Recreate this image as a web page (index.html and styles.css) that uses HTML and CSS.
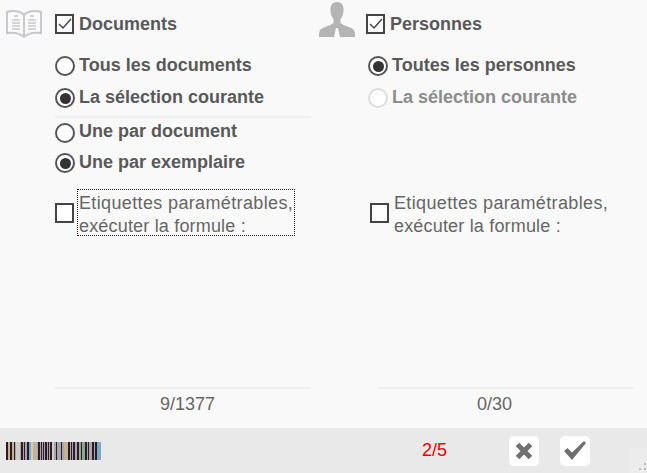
FILE: index.html
```html
<!DOCTYPE html>
<html lang="fr">
  <head>
    <meta charset="UTF-8" />
    <meta name="viewport" content="width=device-width, initial-scale=1.0" />
    <title>Etiquettes</title>
    <link rel="stylesheet" href="styles.css">
  </head>
  <body>
    <div class="wrap">
      <div class="col col-left">
        <div class="head">
          <svg class="icon-book" width="36" height="28" viewBox="0 0 36 28">
            <g fill="#fbfbfb" stroke="#c6c8cc" stroke-width="2">
              <path d="M18 5C14 1 8 0 1 2V23C8 22 14 23 18 27C22 23 28 22 35 23V2C28 0 22 1 18 5Z" />
              <path d="M18 5V27" />
            </g>
            <g stroke="#c8c8c8" stroke-width="1.500" fill="none">
              <path d="M8 6H12M6 10H14M6 13H14M6 16H14M6 19H14" />
              <path d="M24 6H28M22 10H30M22 13H30M22 16H30M22 19H30" />
            </g>
          </svg>
          <label class="check-line">
            <span class="box">
              <svg width="14" height="12" viewBox="0 0 14 12"><path d="M1 6L5 10L13 1" fill="none" stroke="#444" stroke-width="1.500" /></svg>
            </span>
            <b>Documents</b>
          </label>
        </div>
        <div class="options">
          <div class="radio-line"><span class="radio"></span><b>Tous les documents</b></div>
          <div class="radio-line"><span class="radio on"></span><b>La sélection courante</b></div>
          <div class="sep"></div>
          <div class="radio-line short"><span class="radio"></span><b>Une par document</b></div>
          <div class="radio-line"><span class="radio on"></span><b>Une par exemplaire</b></div>
        </div>
        <div class="formula">
          <span class="box"></span>
          <span class="formula-text focus">Etiquettes paramétrables,<br /><span class="line-two">exécuter la formule :</span></span>
        </div>
        <div class="count">9/1377</div>
      </div>

      <div class="col col-right">
        <div class="head">
          <svg class="icon-person" width="36" height="36" viewBox="0 0 36 36">
            <path fill="#b4b4b4" d="M18 0C13 0 11 4 11.500 9C11.700 13 13 15 14.500 17V21C11 24 4 25 1 28C0 30 0 33 0 35H15L17 26H19L21 35H36C36 33 36 30 35 28C32 25 25 24 21.500 21V17C23 15 24.300 13 24.500 9C25 4 23 0 18 0Z" />
          </svg>
          <label class="check-line">
            <span class="box">
              <svg width="14" height="12" viewBox="0 0 14 12"><path d="M1 6L5 10L13 1" fill="none" stroke="#444" stroke-width="1.500" /></svg>
            </span>
            <b>Personnes</b>
          </label>
        </div>
        <div class="options">
          <div class="radio-line"><span class="radio on"></span><b>Toutes les personnes</b></div>
          <div class="radio-line off"><span class="radio"></span><b>La sélection courante</b></div>
        </div>
        <div class="formula">
          <span class="box"></span>
          <span class="formula-text">Etiquettes paramétrables,<br /><span class="line-two">exécuter la formule :</span></span>
        </div>
        <div class="count">0/30</div>
      </div>
    </div>

    <div class="footer">
      <svg class="barcode" width="95" height="18" viewBox="0 0 95 18">
        <rect width="95" height="18" fill="#a8a6ae" />
        <path fill="#c4b296" d="M2 0h2v18H2zM6 0h2v18H6zM27 0h4v18h-4zM58 0h4v18h-4z" />
        <path fill="#ccd0c6" d="M10 0h4v18h-4zM25 0h2v18h-2zM46 0h2v18h-2z" />
        <path fill="#8aa890" d="M74 0h5v18h-5z" />
        <path fill="#78aacc" d="M23 0h2v18h-2zM91 0h4v18h-4z" />
        <path fill="#2e1c22" d="M0 0h2v18H0zM4 0h2v18H4zM8 0h1v18H8zM15 0h2v18h-2zM18 0h1v18h-1zM21 0h2v18h-2zM32 0h2v18h-2zM35 0h1v18h-1zM37 0h1v18h-1zM39 0h2v18h-2zM42 0h1v18h-1zM44 0h2v18h-2zM50 0h1v18h-1zM55 0h1v18h-1zM62 0h2v18h-2zM65 0h1v18h-1zM67 0h2v18h-2zM71 0h2v18h-2zM75 0h1v18h-1zM79 0h2v18h-2zM82 0h1v18h-1zM86 0h2v18h-2zM89 0h2v18h-2z" />
      </svg>
      <div class="pages">2/5</div>
      <button class="btn">
        <svg width="18" height="18" viewBox="0 0 18 18"><path d="M2.500 2.500L15.500 15.500M15.500 2.500L2.500 15.500" stroke="#707070" stroke-width="5" fill="none" /></svg>
      </button>
      <button class="btn">
        <svg width="24" height="20" viewBox="0 0 24 20"><path d="M1 10L4.500 7L9 11.500L21 0L23 2L9 19Z" fill="#707070" /></svg>
      </button>
      <div class="grip"></div>
    </div>
  </body>
</html>
```

FILE: styles.css
```css
* {
  box-sizing: border-box;
}
body {
  margin: 0;
  width: 647px;
  height: 473px;
  overflow: hidden;
  background-color: #f9f9f9;
  color: #595959;
  font-family: "Liberation Sans", Arial, sans-serif;
  font-size: 18px;
  display: flex;
  flex-direction: column;
}
b {
  font-weight: bold;
}

.wrap {
  height: 428px;
  display: grid;
  grid-template-columns: 319px 328px;
}
.col {
  display: flex;
  flex-direction: column;
  padding-right: 13px;
}
.col-left {
  padding-left: 6px;
  padding-right: 8px;
}

.head {
  height: 50px;
  display: flex;
  align-items: flex-start;
}
.icon-book {
  margin-top: 10px;
}
.col-left .check-line {
  margin-left: 13px;
}
.icon-person {
  margin-top: 2px;
}
.check-line {
  display: flex;
  align-items: center;
  gap: 5px;
  margin-top: 14px;
  margin-left: 11px;
  line-height: 20px;
}
.box {
  width: 19px;
  height: 20px;
  flex: none;
  border: 2px solid #444;
  background-color: #fff;
  display: flex;
  align-items: center;
  justify-content: center;
}

.options {
  height: 130px;
  margin-left: 49px;
}
.radio-line {
  height: 32px;
  display: flex;
  align-items: center;
  gap: 4px;
}
.radio-line b {
  margin-bottom: 2px;
}
.radio-line.short {
  height: 29px;
}
.radio {
  width: 20px;
  height: 20px;
  flex: none;
  border: 2px solid #555;
  border-radius: 50%;
  background-color: #fff;
  display: flex;
  align-items: center;
  justify-content: center;
}
.radio.on::after {
  content: "";
  width: 11px;
  height: 11px;
  border-radius: 50%;
  background-color: #333;
}
.off {
  color: #8c8c8c;
}
.off .radio {
  border-color: #ddd;
}
.sep {
  height: 2px;
  background-color: #f0f0f0;
  margin-top: 2px;
}

.formula {
  display: flex;
  align-items: flex-start;
  margin-top: 9px;
  margin-left: 49px;
  height: 198px;
  color: #666;
}
.col-right .formula {
  margin-left: 51px;
}
.formula .box {
  margin-top: 14px;
  margin-right: 3px;
}
.formula-text {
  width: 218px;
  height: 47px;
  white-space: nowrap;
  letter-spacing: 0.36px;
  line-height: 23px;
  padding: 2px 0 0 1px;
  border: 1px dotted transparent;
}
.line-two {
  letter-spacing: 0.18px;
}
.focus {
  border-color: #222;
}

.count {
  border-top: 2px solid #f0f0f0;
  margin-left: 49px;
  padding-top: 5px;
  height: 41px;
  color: #666;
}
.col-left .count {
  padding-left: 105px;
}
.col-right .count {
  margin-left: 59px;
  padding-left: 99px;
}

.footer {
  height: 45px;
  background-color: #e9e9e9;
  display: flex;
  align-items: center;
  position: relative;
}
.barcode {
  flex: none;
  margin-left: 6px;
}
.pages {
  margin-left: 321px;
  width: 87px;
  color: #e00;
}
.btn {
  width: 30px;
  height: 30px;
  padding: 0;
  border: 0;
  border-radius: 5px;
  background-color: #fff;
  display: flex;
  align-items: center;
  justify-content: center;
  margin-right: 21px;
}
.grip {
  position: absolute;
  right: 0;
  bottom: 0;
  width: 17px;
  height: 25px;
  background-color: #ececec;
}
.grip::after {
  content: "";
  position: absolute;
  left: 14px;
  top: 15px;
  width: 2px;
  height: 2px;
  background-color: #bbb;
  box-shadow: 0 5px 0 #bbb, -5px 5px 0 #bbb;
}
```
